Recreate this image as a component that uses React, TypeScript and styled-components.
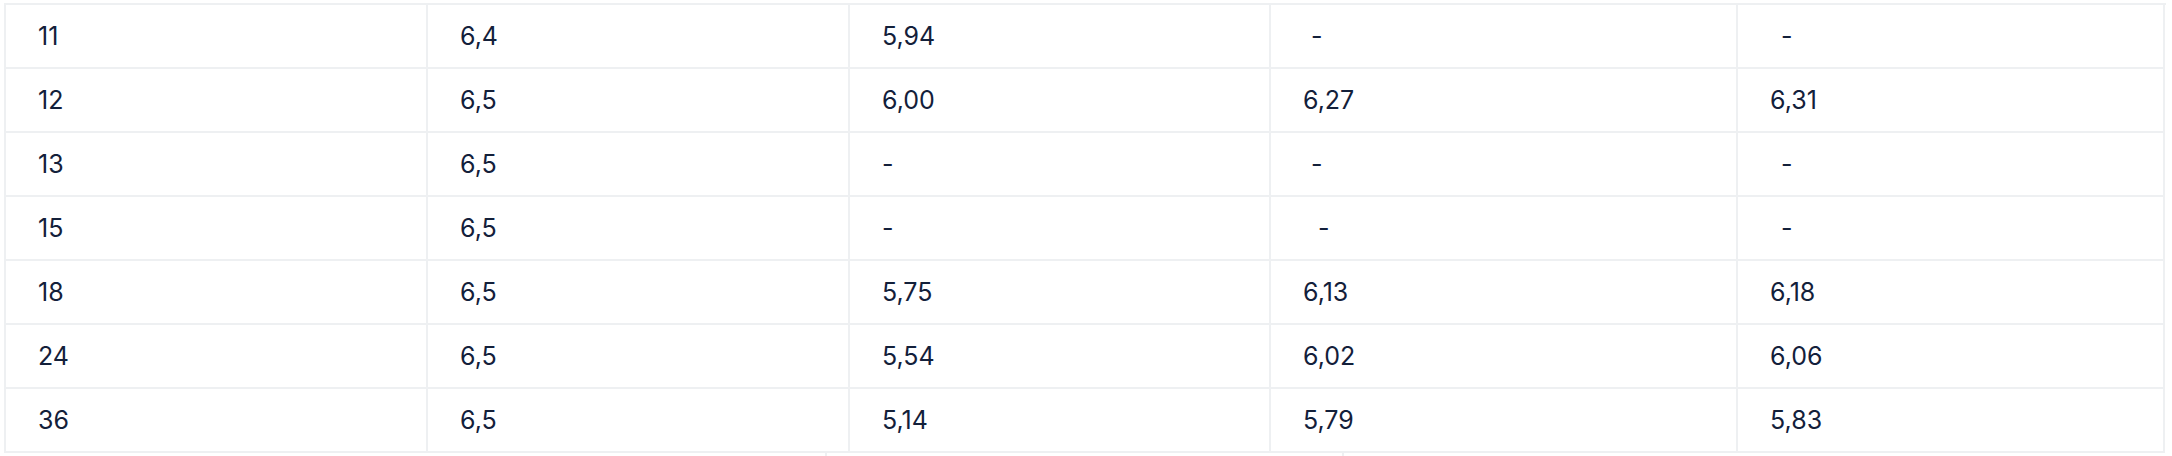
import React from "react";
import styled, { createGlobalStyle } from "styled-components";

const GlobalStyle = createGlobalStyle`
  html, body {
    margin: 0;
    padding: 0;
    background: #ffffff;
  }
  body {
    font-family: Inter, "Noto Sans", sans-serif;
    color: #13203a;
  }
`;

const Page = styled.div`
  padding: 3px 0 0 4px;
  width: 2160px;
`;

const Table = styled.div`
  border-top: 2px solid #eef0f2;
  border-left: 2px solid #eef0f2;
  width: 2160px;
`;

const Row = styled.div`
  display: grid;
  grid-template-columns: 422px 422px 421px 467px 427px;
`;

const Cell = styled.div`
  box-sizing: border-box;
  height: 64px;
  display: flex;
  align-items: center;
  padding-left: 32px;
  border-right: 2px solid #eef0f2;
  border-bottom: 2px solid #eef0f2;
  font-size: 25px;
  font-weight: 400;
  line-height: 1;
  color: #13203a;
`;

const Dash = styled.span<{ $shift: number }>`
  margin-left: ${(p) => p.$shift}px;
`;

const NextBlock = styled.div`
  display: grid;
  grid-template-columns: 825px 517px 1fr;
  height: 40px;
  margin-left: -2px;
`;

const NextCell = styled.div<{ $line?: boolean }>`
  border-right: ${(p) => (p.$line ? "2px solid #eef0f2" : "none")};
`;

type Value = string | { dash: number };

const rows: Value[][] = [
  ["11", "6,4", "5,94", { dash: 8 }, { dash: 11 }],
  ["12", "6,5", "6,00", "6,27", "6,31"],
  ["13", "6,5", { dash: 0 }, { dash: 8 }, { dash: 11 }],
  ["15", "6,5", { dash: 0 }, { dash: 15 }, { dash: 11 }],
  ["18", "6,5", "5,75", "6,13", "6,18"],
  ["24", "6,5", "5,54", "6,02", "6,06"],
  ["36", "6,5", "5,14", "5,79", "5,83"],
];

export default function App() {
  return (
    <>
      <GlobalStyle />
      <Page>
        <Table>
          {rows.map((row, i) => (
            <Row key={i}>
              {row.map((v, j) => (
                <Cell key={j}>
                  {typeof v === "string" ? v : <Dash $shift={v.dash}>-</Dash>}
                </Cell>
              ))}
            </Row>
          ))}
        </Table>
        <NextBlock>
          <NextCell $line />
          <NextCell $line />
          <NextCell />
        </NextBlock>
      </Page>
    </>
  );
}
